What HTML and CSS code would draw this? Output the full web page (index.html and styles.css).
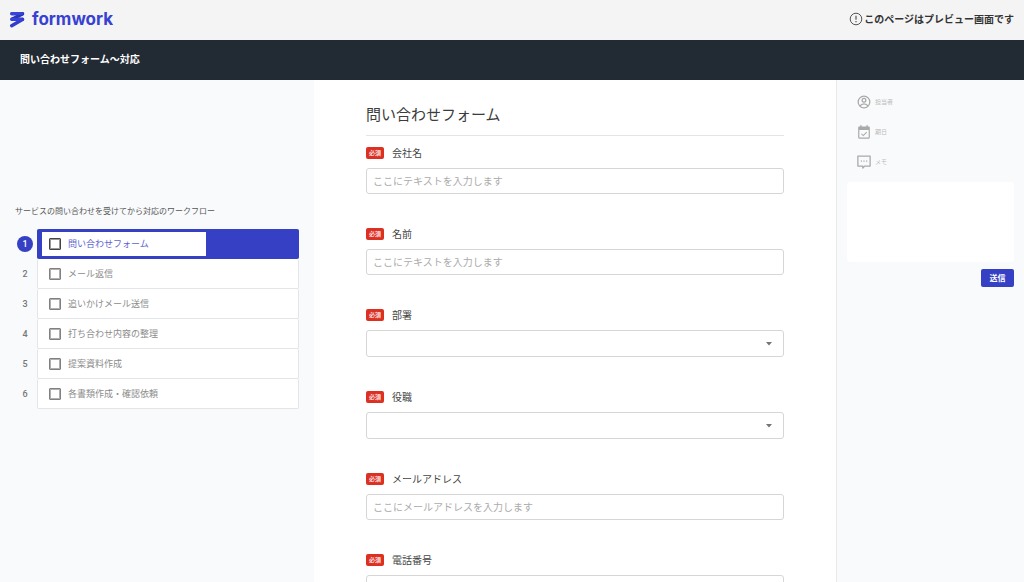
FILE: index.html
```html
<!DOCTYPE html>
<html lang="ja">
<head>
<meta charset="utf-8">
<meta name="viewport" content="width=device-width, initial-scale=1">
<title>問い合わせフォーム〜対応 | formwork</title>
<link rel="stylesheet" href="styles.css">
</head>
<body>
<header class="topbar">
  <a class="brand" href="#">
    <svg class="brand-mark" viewBox="0 0 16 17" aria-hidden="true">
      <g fill="none" stroke-linecap="round" stroke-linejoin="round">
        <path stroke="#3843dc" stroke-width="3.4" d="M2.800 2.700H13.600M2.800 8.300H13.600"/>
        <path stroke="#2a35ae" stroke-width="3.400" d="M13.400 2.900 3.400 8.100"/>
        <path stroke="#323dcc" stroke-width="3.400" d="M13.400 8.500 2.700 14.700"/>
        <path stroke="#3843dc" stroke-width="3" d="M2.800 2.500H12.500M3 8.300H11"/>
      </g>
    </svg>
    <span class="brand-name">formwork</span>
  </a>
  <p class="notice">
    <svg class="notice-icon" viewBox="0 0 14 14" aria-hidden="true">
      <circle cx="7" cy="7" r="5.8" fill="none" stroke="#555" stroke-width="1"/>
      <path d="M7 3.8v3.9M7 9v1.3" stroke="#555" stroke-width="1.2"/>
    </svg>
    このページはプレビュー画面です
  </p>
</header>
<div class="titlebar">問い合わせフォーム〜対応</div>

<main class="layout">
  <nav class="workflow">
    <h2 class="workflow-title">サービスの問い合わせを受けてから対応のワークフロー</h2>
    <ol class="steps">
      <li class="step step-active"><span class="step-number">1</span><label class="step-card"><span class="step-body"><input class="check" type="checkbox">問い合わせフォーム</span></label></li>
      <li class="step"><span class="step-number">2</span><label class="step-card"><span class="step-body"><input class="check" type="checkbox">メール返信</span></label></li>
      <li class="step"><span class="step-number">3</span><label class="step-card"><span class="step-body"><input class="check" type="checkbox">追いかけメール送信</span></label></li>
      <li class="step"><span class="step-number">4</span><label class="step-card"><span class="step-body"><input class="check" type="checkbox">打ち合わせ内容の整理</span></label></li>
      <li class="step"><span class="step-number">5</span><label class="step-card"><span class="step-body"><input class="check" type="checkbox">提案資料作成</span></label></li>
      <li class="step"><span class="step-number">6</span><label class="step-card"><span class="step-body"><input class="check" type="checkbox">各書類作成・確認依頼</span></label></li>
    </ol>
  </nav>

  <form class="form">
    <h1 class="form-title">問い合わせフォーム</h1>
    <div class="fields">
      <div class="field">
        <div class="field-head"><span class="required">必須</span><label for="company">会社名</label></div>
        <input class="control" id="company" type="text" placeholder="ここにテキストを入力します">
      </div>
      <div class="field">
        <div class="field-head"><span class="required">必須</span><label for="name">名前</label></div>
        <input class="control" id="name" type="text" placeholder="ここにテキストを入力します">
      </div>
      <div class="field">
        <div class="field-head"><span class="required">必須</span><label for="department">部署</label></div>
        <div class="select-wrap">
          <select class="control select" id="department"><option></option></select>
          <svg class="caret" viewBox="0 0 8 4" aria-hidden="true"><path d="M1 0h6L4 3.6z" fill="#757575"/></svg>
        </div>
      </div>
      <div class="field">
        <div class="field-head"><span class="required">必須</span><label for="position">役職</label></div>
        <div class="select-wrap">
          <select class="control select" id="position"><option></option></select>
          <svg class="caret" viewBox="0 0 8 4" aria-hidden="true"><path d="M1 0h6L4 3.6z" fill="#757575"/></svg>
        </div>
      </div>
      <div class="field">
        <div class="field-head"><span class="required">必須</span><label for="email">メールアドレス</label></div>
        <input class="control" id="email" type="email" placeholder="ここにメールアドレスを入力します">
      </div>
      <div class="field">
        <div class="field-head"><span class="required">必須</span><label for="phone">電話番号</label></div>
        <input class="control" id="phone" type="tel">
      </div>
    </div>
  </form>

  <aside class="side">
    <div class="meta">
      <svg class="meta-icon" viewBox="0 0 24 24" aria-hidden="true" fill="none" stroke="#a9a9a9" stroke-width="2.2">
        <circle cx="12" cy="12" r="10"/><circle cx="12" cy="9" r="3.2"/><path d="M5 19c2-3 4-3.800 7-3.800s5 .8 7 3.800"/>
      </svg>
      <span>担当者</span>
    </div>
    <div class="meta">
      <svg class="meta-icon" viewBox="0 0 24 24" aria-hidden="true">
        <path fill="#a9a9a9" d="M20 2.500h-1.500V.5h-2.500v2H8v-2H5.500v2H4C2.800 2.500 2 3.400 2 4.500v17c0 1.100.8 2 2 2h16c1.200 0 2-.9 2-2v-17c0-1.100-.8-2-2-2zm0 19H4V8.500h16z"/>
        <path fill="none" stroke="#a9a9a9" stroke-width="1.800" d="m7.500 15 3.200 3.200 6-6"/>
      </svg>
      <span>期日</span>
    </div>
    <label class="meta" for="memo">
      <svg class="meta-icon" viewBox="0 0 24 24" aria-hidden="true">
        <path fill="none" stroke="#a9a9a9" stroke-width="2.200" stroke-linejoin="round" d="M1.500 2h21v17H13l-3 3.500V19H1.500z"/>
        <path fill="#a9a9a9" d="M6.500 9.500h2v2h-2zM11 9.500h2v2h-2zM15.500 9.500h2v2h-2z"/>
      </svg>
      <span>メモ</span>
    </label>
    <div class="memo-box">
      <textarea class="memo" id="memo"></textarea>
      <button class="send" type="button">送信</button>
    </div>
  </aside>
</main>
</body>
</html>
```
FILE: styles.css
```css
* {
  box-sizing: border-box;
}

body {
  display: flex;
  flex-direction: column;
  height: 100vh;
  margin: 0;
  overflow: hidden;
  background: #f9fafc;
  color: #444;
  font-family: "Noto Sans CJK JP", sans-serif;
  font-size: 10px;
  line-height: 20px;
}

h1, h2, p, ol {
  margin: 0;
  padding: 0;
}

input, select, textarea, button {
  margin: 0;
  font-family: inherit;
}

.topbar {
  display: flex;
  flex: none;
  align-items: center;
  justify-content: space-between;
  height: 40px;
  padding: 0 10px 2px 9px;
  background: #f4f4f4;
}

.brand {
  display: flex;
  align-items: center;
  gap: 7px;
  color: #3741d2;
  text-decoration: none;
}

.brand-mark {
  width: 16px;
  height: 17px;
}

.brand-name {
  font-family: Inter, sans-serif;
  font-size: 17px;
  font-weight: 700;
}

.notice {
  display: flex;
  align-items: center;
  gap: 1px;
  color: #333;
  font-weight: 700;
}

.notice-icon {
  width: 14px;
  height: 14px;
}

.titlebar {
  flex: none;
  height: 40px;
  padding: 0 20px;
  background: #222a33;
  color: #fff;
  font-weight: 700;
  line-height: 38px;
}

.layout {
  display: grid;
  flex: 1;
  grid-template-columns: 314px minmax(0, 1fr) 188px;
  min-height: 0;
}

.workflow {
  padding: 121px 15px 0;
}

.workflow-title {
  margin-bottom: 8px;
  color: #555;
  font-size: 8px;
  font-weight: 400;
  white-space: nowrap;
}

.steps {
  list-style: none;
}

.step {
  display: flex;
  align-items: center;
  gap: 2px;
  height: 30px;
}

.step-number {
  width: 20px;
  color: #777;
  font-family: Roboto, sans-serif;
  font-size: 9px;
  font-weight: 500;
  text-align: center;
}

.step-card {
  display: flex;
  flex: 1;
  height: 30px;
  padding: 3px 4px;
  border: 1px solid #e4e5e7;
  border-top-width: 0;
  border-radius: 2px;
  background: #fff;
}

.step-body {
  display: flex;
  align-items: center;
  gap: 7px;
  width: 164px;
  padding-left: 7px;
  background: #fff;
  color: #8c8c8c;
  font-size: 9px;
}

.step-active .step-number {
  width: 16px;
  height: 16px;
  margin: 0 2px;
  border-radius: 50%;
  background: #3540c4;
  color: #fff;
  line-height: 16px;
}

.step-active .step-card {
  border-width: 0 1px;
  border-color: #3540c4;
  background: #3540c4;
}

.step-active .step-body {
  color: #5c64d0;
}

.check {
  width: 12px;
  height: 12px;
  border: 1px solid #808080;
  border-radius: 1px;
  outline: 0;
  appearance: none;
  background: #fff;
  box-shadow: inset 0 0 0 1px #b0b0b0;
}

.step-active .check {
  border-color: #444;
  box-shadow: inset 0 0 0 1px #999;
}

.check:checked {
  background: #3540c4;
}

.form {
  padding: 19px 52px;
  overflow-y: auto;
  background: #fff;
  scrollbar-width: none;
}

.form-title {
  margin-bottom: 7px;
  padding-bottom: 7px;
  border-bottom: 1px solid #e4e4e4;
  color: #3c3c3c;
  font-size: 15px;
  font-weight: 400;
  line-height: 29px;
}

.fields {
  display: grid;
  gap: 30px;
}

.field-head {
  display: flex;
  align-items: center;
  gap: 8px;
  margin-bottom: 5px;
}

.required {
  width: 18px;
  height: 12px;
  border-radius: 2px;
  background: #dc3023;
  color: #fff;
  font-size: 6px;
  font-weight: 500;
  line-height: 12px;
  text-align: center;
}

.control {
  display: block;
  width: 100%;
  height: 26px;
  padding: 0 6px 2px;
  border: 1px solid #d6d6d6;
  border-radius: 3px;
  background: #fff;
  color: #444;
  font-size: 10px;
}

.control::placeholder {
  color: #ababab;
}

.select-wrap {
  position: relative;
}

.select {
  height: 27px;
  appearance: none;
}

.caret {
  position: absolute;
  top: 12px;
  right: 11px;
  width: 8px;
  height: 4px;
  pointer-events: none;
}

.side {
  display: flex;
  flex-direction: column;
  gap: 10px;
  padding: 12px 10px;
  border-left: 1px solid #e8e9ec;
}

.meta {
  display: flex;
  align-items: center;
  gap: 4px;
  padding-left: 10px;
  color: #bbb;
  font-size: 6px;
}

.meta-icon {
  width: 14px;
  height: 14px;
}

.memo-box {
  display: flex;
  flex-direction: column;
  gap: 7px;
}

.memo {
  height: 80px;
  padding: 8px;
  border: 0;
  border-radius: 3px;
  background: #fff;
  font-size: 10px;
  resize: none;
}

.send {
  align-self: flex-end;
  width: 33px;
  height: 18px;
  padding: 0;
  border: 0;
  border-radius: 2px;
  background: #3540c4;
  color: #fff;
  font-size: 8px;
  font-weight: 700;
  line-height: 18px;
}
```
